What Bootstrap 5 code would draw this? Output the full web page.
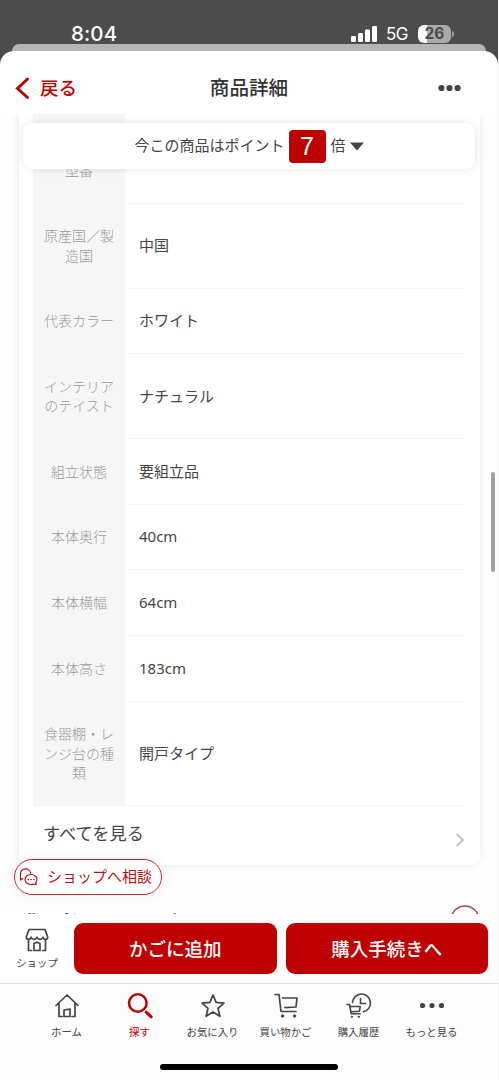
<!DOCTYPE html>
<html lang="ja">
<head>
<meta charset="utf-8">
<meta name="viewport" content="width=device-width, initial-scale=1">
<title>商品詳細</title>
<link href="https://cdn.jsdelivr.net/npm/bootstrap@5.3.0/dist/css/bootstrap.min.css" rel="stylesheet">
<style>
:root{--brand:#bf0000;--ink:#444}
body{margin:0;width:499px;height:1080px;overflow:hidden;background:linear-gradient(90deg,#4c4c4c 498px,#f4f4f4 498px);color:var(--ink);font-family:"Noto Sans","Noto Sans CJK JP",sans-serif;font-size:15px;line-height:1.3}
svg{display:block;flex:none}
.status-row{height:44px;padding:24px 45px 0 71px;color:#fff}
.clock{font:500 20.5px/24px Inter,sans-serif;letter-spacing:.1px}
.net{font:400 17px/24px Inter,sans-serif;margin-left:9px;width:24px;letter-spacing:-.5px}
.battery{width:33px;height:18px;border-radius:6px;margin-left:8px;background:linear-gradient(90deg,#fff 26%,#aaa 26%);color:#4c4c4c;font:700 15.5px/18px Inter,sans-serif;text-align:center}
.nub{width:2px;height:6px;border-radius:0 2px 2px 0;background:#999;margin-left:1px}
.sheet-behind{height:7px;margin:0 13px 0 12px;background:#b5b5b5;border-radius:10px 10px 0 0}
.sheet{width:498px;height:1029px;background:#fff;border-radius:14px 14px 0 0;overflow:hidden}
.behind-corners{background:linear-gradient(90deg,transparent 12px,#b5b5b5 12px,#b5b5b5 486px,transparent 486px) 0 0/100% 4px no-repeat}
.title-row{height:63px;padding:11px 15px 0}
.title-row>*{flex:1}
.more svg{margin-right:22px}
.back{color:var(--brand);font-size:18.5px;font-weight:500;gap:10px}
.page-title{font-size:19.6px;font-weight:500;color:#333;text-align:center;white-space:nowrap}
.scroller{height:800px;overflow:hidden;background:#fefefe}
.spec-card{margin:0 18px 0 19px;height:751px;padding:0 15px 0 14px;background:#fff;border-radius:0 0 9px 9px;box-shadow:0 0 8px rgba(0,0,0,.09)}
.spec{display:flex;border-bottom:1px solid #f6f6f6}
.spec-key{width:92px;background:#f6f6f6;color:#999;font-size:14px;line-height:19.5px;padding:0 10px;font-weight:300;display:flex;align-items:center;justify-content:center;text-align:center}
.spec-val{padding-left:14px;display:flex;align-items:center}
.spec-first{height:90px}.spec-first .spec-key{align-items:flex-end;padding-bottom:23px}
.spec-one{height:65.6px}.spec-two{height:84.8px}.spec-three{height:104.5px}
.see-all{height:57px;padding:0 0 0 10px;font-size:17.2px}
.see-all svg{margin-top:11px}
.banner{left:23px;top:123px;width:452px;height:46px;border-radius:9px;background:#fff;box-shadow:0 0 8px rgba(0,0,0,.1)}
.times{width:37px;height:33px;margin:0 5px 0 4px;background:var(--brand);border-radius:4px;color:#fff;font:400 25px/33px "Liberation Sans",sans-serif;text-align:center}
.consult{left:14px;top:859px;width:148px;height:36px;border:1.3px solid #c4282d;border-radius:18px;background:#fff;color:#b81216;padding-left:4px;gap:9px;box-shadow:0 0 16px rgba(0,0,0,.07);white-space:nowrap}
.review-row{padding:40px 18px 0 18px;height:80px}
.review-title{font-size:20px;line-height:26px;font-weight:700;color:#333;white-space:nowrap;padding-top:6px}
.bar-thumb{left:491px;top:472px;width:4px;height:100px;border-radius:2px;background:#a0a0a0}
.actions{height:69px;padding:9px 10px 0 0;background:#fff}
.shop{flex:0 0 74px;font-size:10.4px;line-height:14px;padding-top:4px}
.buy{flex:1 1 0;height:51px;border-radius:9px;background:var(--brand);color:#fff;font-size:18.5px;font-weight:500;padding:0;border:0}
.tabs{height:97px;border-top:1px solid #ddd;padding:7px 30px 0;background:#fdfcfd}
.tab{width:73px;font-size:10.4px;line-height:14px;white-space:nowrap;gap:4px}
.tab.on{color:var(--brand)}
.home-line{left:160px;top:1064px;width:178px;height:6px;border-radius:3px;background:#000}
</style>
<script src="https://cdn.jsdelivr.net/npm/bootstrap@5.3.0/dist/js/bootstrap.bundle.min.js"></script>
</head>
<body class="position-relative">
<div class="status-row d-flex align-items-center">
  <span class="clock me-auto">8:04</span>
  <svg width="26" height="16" fill="#fff"><rect y="10" width="5" height="6" rx="1.2"/><rect x="7" y="7" width="5" height="9" rx="1.2"/><rect x="14" y="3.5" width="5" height="12.5" rx="1.2"/><rect x="21" width="5" height="16" rx="1.2"/></svg>
  <span class="net">5G</span><span class="battery">26</span><span class="nub"></span>
</div>
<div class="sheet-behind"></div>
<div class="behind-corners">
<main class="sheet">
  <header class="title-row d-flex align-items-center">
    <div class="back d-flex align-items-center"><svg width="15" height="24" fill="none" stroke="#bf0000" stroke-width="3" stroke-linecap="round"><path d="M12.500 3 2.500 12.500l10 9"/></svg><span>戻る</span></div>
    <div class="page-title">商品詳細</div>
    <div class="more d-flex justify-content-end"><svg width="23" height="8" fill="#444"><circle cx="3.400" cy="4" r="3.100"/><circle cx="11.500" cy="4" r="3.100"/><circle cx="19.600" cy="4" r="3.100"/></svg></div>
  </header>
  <div class="scroller">
    <section class="spec-card">
      <div class="spec spec-first"><div class="spec-key">型番</div><div class="spec-val"></div></div>
      <div class="spec spec-two"><div class="spec-key">原産国／製<br>造国</div><div class="spec-val">中国</div></div>
      <div class="spec spec-one"><div class="spec-key">代表カラー</div><div class="spec-val">ホワイト</div></div>
      <div class="spec spec-two"><div class="spec-key">インテリア<br>のテイスト</div><div class="spec-val">ナチュラル</div></div>
      <div class="spec spec-one"><div class="spec-key">組立状態</div><div class="spec-val">要組立品</div></div>
      <div class="spec spec-one"><div class="spec-key">本体奥行</div><div class="spec-val">40cm</div></div>
      <div class="spec spec-one"><div class="spec-key">本体横幅</div><div class="spec-val">64cm</div></div>
      <div class="spec spec-one"><div class="spec-key">本体高さ</div><div class="spec-val">183cm</div></div>
      <div class="spec spec-three"><div class="spec-key">食器棚・レ<br>ンジ台の種<br>類</div><div class="spec-val">開戸タイプ</div></div>
      <div class="see-all d-flex align-items-center justify-content-between"><span>すべてを見る</span><svg width="10" height="16" fill="none" stroke="#c4c4c4" stroke-width="2.200"><path d="m1.500 2 6.500 6-6.500 6"/></svg></div>
    </section>
    <div class="review-row d-flex justify-content-between"><span class="review-title">購入者さんのレビュー</span><svg width="30" height="30" fill="none" stroke="#b5434a" stroke-width="1.400"><circle cx="15" cy="15" r="14"/></svg></div>
  </div>
  <div class="actions d-flex">
    <div class="shop d-flex flex-column align-items-center">
      <svg width="26" height="26" viewBox="0 0 26 26" fill="none" stroke="#444" stroke-width="1.700" stroke-linecap="round" stroke-linejoin="round"><path d="M5 2.500h16l2.700 7.500c0 1.500-.8 2.300-2 2.300-1.400 0-2.400-.8-2.800-2.100-.5 1.300-1.500 2.100-2.900 2.100s-2.500-.8-3-2.100c-.5 1.300-1.600 2.100-3 2.100s-2.400-.8-2.900-2.100c-.4 1.300-1.400 2.100-2.800 2.100-1.200 0-2-.8-2-2.300zM4.500 12.500v11h3M21.500 12.500v11h-3M10 23.500v-7l3-1.200 3 1.200v7z"/></svg><span style="margin-top:3px">ショップ</span>
    </div>
    <button class="btn buy">かごに追加</button>
    <button class="btn buy" style="margin-left:9px">購入手続きへ</button>
  </div>
  <nav class="tabs d-flex">
    <div class="tab d-flex flex-column align-items-center"><svg width="28" height="30" viewBox="0 0 28 30" fill="none" stroke="#444" stroke-width="1.700" stroke-linecap="round" stroke-linejoin="round"><path d="M3 14.500 14 4l11 10.500M6 12v13.500h3M22 12v13.500h-3M11 25.500v-6.500l6-.8v7.300z"/></svg>ホーム</div>
    <div class="tab on d-flex flex-column align-items-center"><svg width="28" height="30" viewBox="0 0 28 30" fill="none" stroke="#bf0000" stroke-width="2.500"><circle cx="11.800" cy="12" r="8.800"/><path d="m20.200 21.200 5 4.600" stroke-width="3" stroke-linecap="round"/></svg>探す</div>
    <div class="tab d-flex flex-column align-items-center"><svg width="28" height="30" viewBox="0 0 28 30" fill="none" stroke="#444" stroke-width="1.700" stroke-linejoin="round"><path d="m14 4 3.100 7.400 7.900.7-6 5.200 1.900 8L14 21.100l-6.900 4.200 1.900-8-6-5.200 7.900-.7z"/></svg>お気に入り</div>
    <div class="tab d-flex flex-column align-items-center"><svg width="28" height="30" viewBox="0 0 28 30" fill="none" stroke="#444" stroke-width="1.700" stroke-linecap="round" stroke-linejoin="round"><path d="M3 3.500h4l2 17h15M10.500 7H25l-1 9-11 .7"/><circle cx="10.500" cy="25" r="1.200" fill="#444" stroke-width="1"/><circle cx="22.500" cy="25" r="1.200" fill="#444" stroke-width="1"/></svg>買い物かご</div>
    <div class="tab d-flex flex-column align-items-center"><svg width="28" height="30" viewBox="0 0 28 30" fill="none" stroke="#444" stroke-width="1.600" stroke-linecap="round" stroke-linejoin="round"><path d="M7.500 11.500A9 9 0 1 1 18.500 20.800M15.500 7.500v5h5M2 13.500h2.500l1.700 9.200h9M5.300 15.500h10l-1 4.800-8.200.4"/><circle cx="6.800" cy="25.800" r=".8" fill="#444" stroke-width=".7"/><circle cx="13.800" cy="25.800" r=".8" fill="#444" stroke-width=".7"/></svg>購入履歴</div>
    <div class="tab d-flex flex-column align-items-center"><svg width="28" height="30" viewBox="0 0 28 30" fill="#444"><circle cx="4.500" cy="14.500" r="2.600"/><circle cx="14" cy="14.500" r="2.600"/><circle cx="23.500" cy="14.500" r="2.600"/></svg>もっと見る</div>
  </nav>
</main>
</div>
<div class="banner position-absolute d-flex align-items-center justify-content-center"><span>今この商品はポイント</span><span class="times">7</span><span>倍</span><svg class="ms-1" width="14" height="9" fill="#444"><path d="M0 .5h14L7 8.500z"/></svg></div>
<div class="consult position-absolute d-flex align-items-center"><svg width="19" height="18" viewBox="0 0 19 18" fill="none" stroke="#b81216" stroke-width="1.200" stroke-linejoin="round" stroke-linecap="round"><path d="M3.500 10.500 1.500 12V6.800a5.200 5.200 0 0 1 10.300-1.500M12 6.500c-3.400 0-6 2.200-6 5s2.600 5 6 5c1 0 1.800-.2 2.600-.5l2.600.7-.4-2.300c.7-.8 1.200-1.800 1.200-2.900 0-2.800-2.600-5-6-5z"/><path d="M9.200 11.500h.1M12 11.500h.1M14.800 11.500h.1" stroke-width="1.500"/></svg><span>ショップへ相談</span></div>
<div class="bar-thumb position-absolute"></div>
<div class="home-line position-absolute"></div>
</body>
</html>
